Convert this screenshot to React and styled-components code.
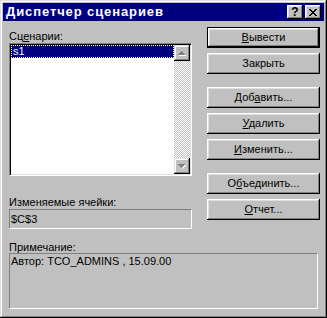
import styled, { createGlobalStyle, css } from "styled-components";

const Global = createGlobalStyle`
    html, body {
        margin: 0;
        padding: 0;
        background: #c0c0c0;
    }
    body {
        font-family: "Liberation Sans", Arial, sans-serif;
        font-size: 11px;
        color: #000;
    }
`;

const raised = css`
    box-shadow: inset -1px -1px #000, inset 1px 1px #fff,
        inset -2px -2px #808080, inset 2px 2px #dfdfdf;
`;

const Window = styled.div`
    width: 327px;
    height: 318px;
    box-sizing: border-box;
    padding: 3px;
    background: #c0c0c0;
    box-shadow: inset -1px -1px #000, inset 1px 1px #dfdfdf,
        inset -2px -2px #808080, inset 2px 2px #fff;
    display: flex;
    flex-direction: column;
`;

const TitleBar = styled.div`
    height: 18px;
    background: #000080;
    display: flex;
    align-items: flex-start;
    padding: 0 3px 0 3px;
`;

const Title = styled.div`
    color: #fff;
    font-weight: bold;
    font-size: 13px;
    letter-spacing: 0.9px;
    line-height: 18px;
`;

const TitleButtons = styled.div`
    margin-left: auto;
    margin-top: 2px;
    display: flex;
    gap: 2px;
`;

const TitleButton = styled.div`
    width: 16px;
    height: 14px;
    box-sizing: border-box;
    background: #c0c0c0;
    ${raised};
    display: flex;
    align-items: center;
    justify-content: center;
    font-weight: bold;
    font-size: 12px;
    line-height: 14px;
`;

const Body = styled.div`
    flex: 1;
    padding: 6px 4px 6px 6px;
    display: flex;
    flex-direction: column;
`;

const Top = styled.div`
    display: flex;
    justify-content: space-between;
`;

const LeftCol = styled.div`
    width: 183px;
    display: flex;
    flex-direction: column;
`;

const Label = styled.div`
    height: ${(p) => p.$h || 13}px;
    line-height: ${(p) => p.$h || 13}px;
    margin-top: ${(p) => p.$top || 0}px;
    white-space: nowrap;
`;

const ListBox = styled.div`
    width: 183px;
    height: 133px;
    box-sizing: border-box;
    background: #fff;
    border-top: 1px solid #808080;
    border-left: 1px solid #808080;
    border-bottom: 1px solid #fff;
    border-right: 1px solid #fff;
    box-shadow: inset 1px 1px #000, inset -1px -1px #dfdfdf;
    padding: 1px;
    display: flex;
`;

const Items = styled.div`
    flex: 1;
`;

const Item = styled.div`
    height: 13px;
    box-sizing: border-box;
    background: ${(p) => (p.$selected ? "#000080" : "transparent")};
    color: ${(p) => (p.$selected ? "#fff" : "#000")};
    border: 1px dotted ${(p) => (p.$selected ? "#ffffc0" : "transparent")};
    padding-left: 1px;
    line-height: 11px;
`;

const ScrollBar = styled.div`
    width: 16px;
    display: flex;
    flex-direction: column;
`;

const ScrollButton = styled.div`
    width: 16px;
    height: 16px;
    box-sizing: border-box;
    background: #c0c0c0;
    box-shadow: inset -1px -1px #000, inset 1px 1px #dfdfdf,
        inset -2px -2px #808080, inset 2px 2px #fff;
    display: flex;
    align-items: center;
    justify-content: center;
`;

const Track = styled.div`
    flex: 1;
    background-image: repeating-conic-gradient(#fff 0 25%, #c0c0c0 0 50%);
    background-size: 2px 2px;
`;

const Field = styled.div`
    width: ${(p) => p.$w}px;
    height: ${(p) => p.$h}px;
    box-sizing: border-box;
    border-top: 1px solid #808080;
    border-left: 1px solid #808080;
    border-bottom: 1px solid #fff;
    border-right: 1px solid #fff;
    padding: ${(p) => (p.$multi ? "1px 1px" : "0 0 0 1px")};
    line-height: ${(p) => (p.$multi ? 13 : 18)}px;
    white-space: nowrap;
`;

const RightCol = styled.div`
    width: 113px;
    display: flex;
    flex-direction: column;
    gap: 13px;
`;

const ButtonGroup = styled.div`
    display: flex;
    flex-direction: column;
    gap: 5px;
`;

const Button = styled.button`
    width: 113px;
    height: 21px;
    box-sizing: border-box;
    margin: 0;
    padding: 0;
    border: none;
    background: #c0c0c0;
    font-family: "Liberation Sans", Arial, sans-serif;
    font-size: 11px;
    color: #000;
    line-height: 19px;
    ${raised};
    ${(p) =>
        p.$default &&
        css`
            border: 1px solid #000;
            line-height: 17px;
        `}
    u {
        text-decoration-thickness: 1px;
        text-underline-offset: 1px;
    }
`;

const Note = styled(Field)`
    margin-right: 2px;
`;

const CloseIcon = () => (
    <svg width="8" height="7" viewBox="0 0 8 7" shapeRendering="crispEdges">
        {[
            [0, 0], [6, 0], [1, 1], [5, 1], [2, 2], [4, 2], [3, 3],
            [2, 4], [4, 4], [1, 5], [5, 5], [0, 6], [6, 6],
        ].map(([x, y]) => (
            <rect key={`${x}-${y}`} x={x} y={y} width="2" height="1" fill="#000" />
        ))}
    </svg>
);

const Arrow = ({ down }) => {
    const rows = [
        [3, 1],
        [2, 3],
        [1, 5],
        [0, 7],
    ];
    const list = down ? [...rows].reverse() : rows;
    return (
        <svg width="8" height="5" viewBox="0 0 8 5" shapeRendering="crispEdges">
            {list.map(([x, w], i) => (
                <rect key={"s" + i} x={x + 1} y={i + 1} width={w} height="1" fill="#fff" />
            ))}
            {list.map(([x, w], i) => (
                <rect key={"a" + i} x={x} y={i} width={w} height="1" fill="#808080" />
            ))}
        </svg>
    );
};

export default function App() {
    return (
        <>
            <Global />
            <Window>
                <TitleBar>
                    <Title>Диспетчер сценариев</Title>
                    <TitleButtons>
                        <TitleButton>?</TitleButton>
                        <TitleButton>
                            <CloseIcon />
                        </TitleButton>
                    </TitleButtons>
                </TitleBar>
                <Body>
                    <Top>
                        <LeftCol>
                            <Label $top={3}>
                                Сц<u>е</u>нарии:
                            </Label>
                            <ListBox>
                                <Items>
                                    <Item $selected>s1</Item>
                                </Items>
                                <ScrollBar>
                                    <ScrollButton>
                                        <Arrow />
                                    </ScrollButton>
                                    <Track />
                                    <ScrollButton>
                                        <Arrow down />
                                    </ScrollButton>
                                </ScrollBar>
                            </ListBox>
                            <Label $top={20}>Изменяемые ячейки:</Label>
                            <Field $w={183} $h={20}>
                                $C$3
                            </Field>
                        </LeftCol>
                        <RightCol>
                            <ButtonGroup>
                                <Button $default>
                                    <u>В</u>ывести
                                </Button>
                                <Button>Закрыть</Button>
                            </ButtonGroup>
                            <ButtonGroup>
                                <Button>
                                    Доб<u>а</u>вить...
                                </Button>
                                <Button>
                                    <u>У</u>далить
                                </Button>
                                <Button>
                                    <u>И</u>зменить...
                                </Button>
                            </ButtonGroup>
                            <ButtonGroup>
                                <Button>
                                    О<u>б</u>ъединить...
                                </Button>
                                <Button>
                                    <u>О</u>тчет...
                                </Button>
                            </ButtonGroup>
                        </RightCol>
                    </Top>
                    <Label $top={12} $h={12}>
                        Примечание:
                    </Label>
                    <Note $w={309} $h={56} $multi>
                        Автор: TCO_ADMINS , 15.09.00
                    </Note>
                </Body>
            </Window>
        </>
    );
}
